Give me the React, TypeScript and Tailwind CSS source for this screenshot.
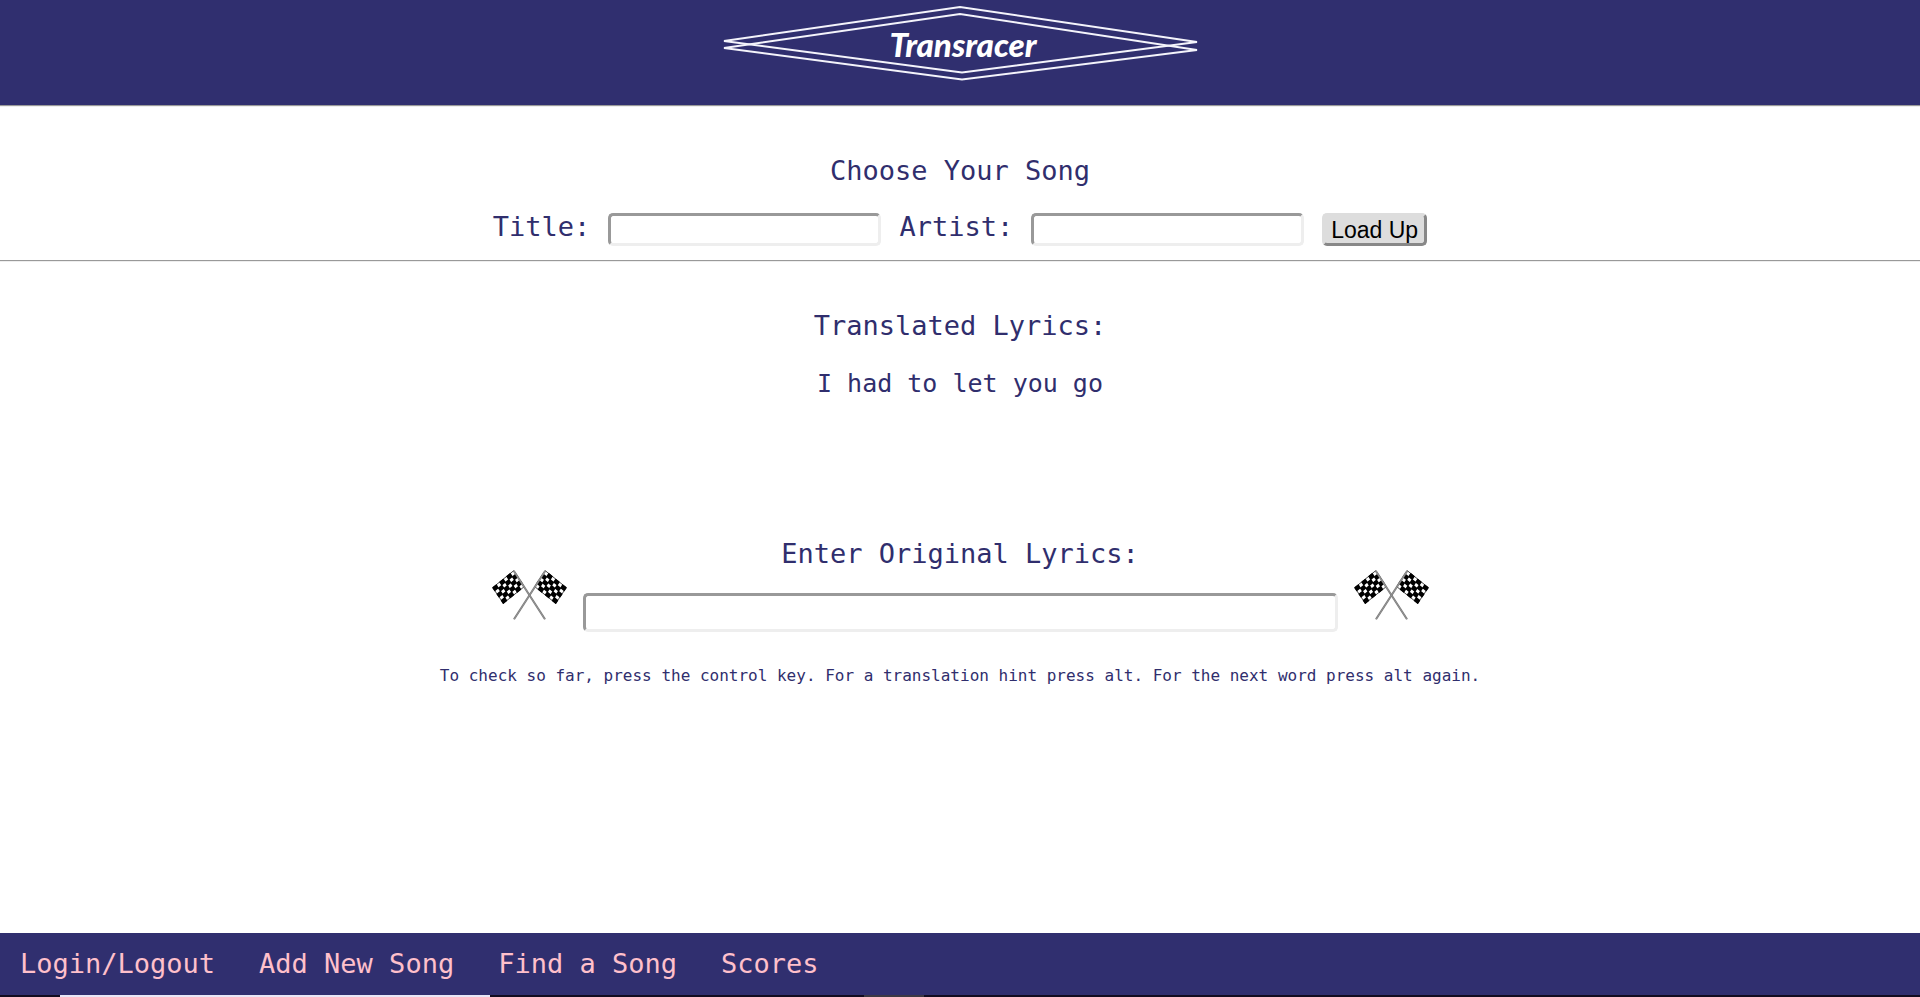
import { useState } from "react";

const COLUMNS = 6;
const ROWS = 5;

const cells = Array.from({ length: COLUMNS * ROWS }, (_, n) => ({
  column: n % COLUMNS,
  row: Math.floor(n / COLUMNS),
})).filter(({ column, row }) => (COLUMNS - 1 - column + row) % 2 === 0);

function Flag() {
  return (
    <g>
      <path d="M21.7 .7 .7 17.6 11.3 33.3 32.3 16.6Z" fill="#fff" stroke="#444" strokeWidth="1" />
      <g transform="matrix(-21 16.9 10.6 15.9 21.7 .7)">
        {cells.map(({ column, row }) => (
          <rect
            key={`${column}-${row}`}
            x={column / COLUMNS - 0.02}
            y={row / ROWS - 0.02}
            width={1 / COLUMNS + 0.04}
            height={1 / ROWS + 0.04}
            rx=".03"
            fill="#000"
          />
        ))}
      </g>
      <path d="M21.7 .7 53 49.3" stroke="#777" strokeWidth="2" />
      <path d="M21.7 .7 53 49.3" stroke="#aaa" strokeWidth=".6" />
    </g>
  );
}

function CrossedFlags() {
  return (
    <svg viewBox="0 0 75 50" className="mb-3 h-[50px] w-[75px] shrink-0" role="img" aria-label="Checkered flags">
      <Flag />
      <g transform="translate(75 0) scale(-1 1)">
        <Flag />
      </g>
    </svg>
  );
}

function Logo() {
  return (
    <svg viewBox="0 0 480 84" className="h-[84px] w-[480px] max-w-full" role="img" aria-label="Transracer">
      <g fill="none" stroke="#f4f4fb" strokeWidth="2">
        <path d="M4 41 240 7 477 42 242 72.500Z" />
        <path d="M4 48 240 14 477 50 242 79.500Z" />
      </g>
      <text
        x="243"
        y="57"
        textAnchor="middle"
        fill="#fff"
        className="font-['Lato',sans-serif] text-[33px] font-black italic"
      >
        Transracer
      </text>
    </svg>
  );
}

const field =
  "rounded-[5px] border-[3px] border-t-[#999] border-l-[#999] border-r-[#eee] border-b-[#eee] bg-white px-1 font-['Liberation_Sans',sans-serif] text-[23px] text-black outline-none";

const links = ["Login/Logout", "Add New Song", "Find a Song", "Scores"];

export default function App() {
  const [title, setTitle] = useState("");
  const [artist, setArtist] = useState("");
  const [lyrics, setLyrics] = useState("");

  return (
    <div className="flex min-h-screen flex-col bg-white font-['DejaVu_Sans_Mono',monospace] text-[27px] leading-8 text-[#302e6d]">
      <header className="flex justify-center bg-[#302f6f] pb-[21px]">
        <h1>
          <Logo />
        </h1>
      </header>
      <hr className="border-t border-b border-t-[#999] border-b-[#eee]" />

      <main className="flex grow flex-col">
        <section className="flex flex-col items-center pt-12 pb-[14px]">
          <h2>Choose Your Song</h2>
          <form
            className="mt-[26px] flex flex-wrap items-start justify-center gap-[18px]"
            onSubmit={(event) => event.preventDefault()}
          >
            <label htmlFor="title" className="leading-7">Title:</label>
            <input
              id="title"
              value={title}
              onChange={(event) => setTitle(event.target.value)}
              className={`${field} h-[33px] w-[273px]`}
            />
            <label htmlFor="artist" className="leading-7">Artist:</label>
            <input
              id="artist"
              value={artist}
              onChange={(event) => setArtist(event.target.value)}
              className={`${field} h-[33px] w-[273px]`}
            />
            <button
              type="submit"
              className="h-[33px] w-[105px] rounded-[5px] border-[3px] border-t-[#ddd] border-r-[#888] border-b-[#888] border-l-[#ddd] bg-[#ddd] font-['Liberation_Sans',sans-serif] text-[23px] leading-7 whitespace-nowrap text-black"
            >
              Load Up
            </button>
          </form>
        </section>
        <hr className="border-t border-b border-t-[#999] border-b-[#eee]" />

        <section className="flex flex-col items-center pt-12">
          <h2>Translated Lyrics:</h2>
          <p className="mt-[26px] text-[25px]">I had to let you go</p>
        </section>

        <section className="mt-[138px] flex flex-col items-center px-4">
          <label htmlFor="lyrics">Enter Original Lyrics:</label>
          <div className="flex max-w-full items-end justify-center gap-4">
            <CrossedFlags />
            <input
              id="lyrics"
              value={lyrics}
              onChange={(event) => setLyrics(event.target.value)}
              className={`${field} h-[39px] w-[755px] min-w-0`}
            />
            <CrossedFlags />
          </div>
          <p className="mt-7 text-center text-base leading-8">
            To check so far, press the control key. For a translation hint press alt. For the next word press alt again.
          </p>
        </section>
      </main>

      <footer>
        <nav className="flex flex-wrap gap-x-11 bg-[#302f6f] px-5 py-[15px] text-[#ffc0cb]">
          {links.map((link) => (
            <a key={link} href="#">
              {link}
            </a>
          ))}
        </nav>
        <div className="flex h-0.5 bg-[#120c20]">
          <span className="ml-[60px] w-[430px] bg-[#e8e6f6]" />
          <span className="ml-[374px] w-[60px] bg-[#3c3844]" />
        </div>
      </footer>
    </div>
  );
}
